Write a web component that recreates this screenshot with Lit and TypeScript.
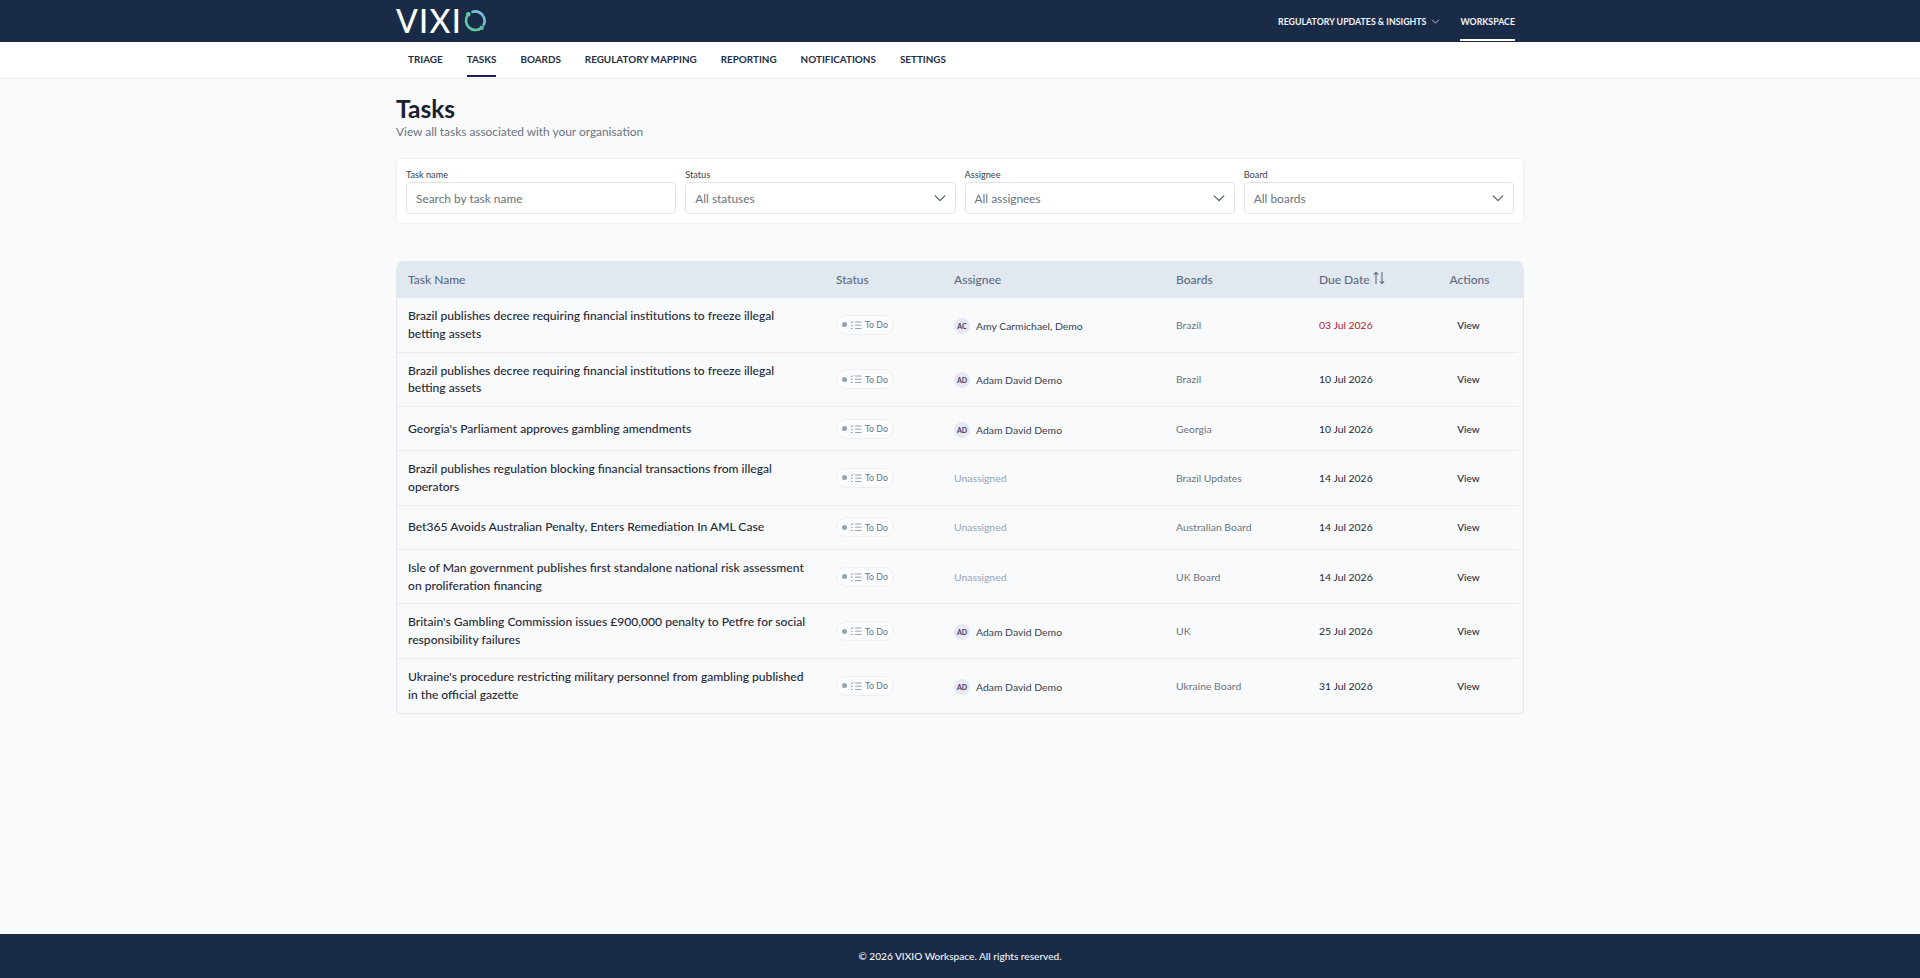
import { LitElement, html, css, svg } from 'lit';
import { customElement } from 'lit/decorators.js';

interface Task {
  name: string;
  initials?: string;
  assignee?: string;
  board: string;
  due: string;
  overdue?: boolean;
}

const TASKS: Task[] = [
  { name: 'Brazil publishes decree requiring financial institutions to freeze illegal betting assets', initials: 'AC', assignee: 'Amy Carmichael, Demo', board: 'Brazil', due: '03 Jul 2026', overdue: true },
  { name: 'Brazil publishes decree requiring financial institutions to freeze illegal betting assets', initials: 'AD', assignee: 'Adam David Demo', board: 'Brazil', due: '10 Jul 2026' },
  { name: "Georgia's Parliament approves gambling amendments", initials: 'AD', assignee: 'Adam David Demo', board: 'Georgia', due: '10 Jul 2026' },
  { name: 'Brazil publishes regulation blocking financial transactions from illegal operators', board: 'Brazil Updates', due: '14 Jul 2026' },
  { name: 'Bet365 Avoids Australian Penalty, Enters Remediation In AML Case', board: 'Australian Board', due: '14 Jul 2026' },
  { name: 'Isle of Man government publishes first standalone national risk assessment on proliferation financing', board: 'UK Board', due: '14 Jul 2026' },
  { name: "Britain's Gambling Commission issues £900,000 penalty to Petfre for social responsibility failures", initials: 'AD', assignee: 'Adam David Demo', board: 'UK', due: '25 Jul 2026' },
  { name: "Ukraine's procedure restricting military personnel from gambling published in the official gazette", initials: 'AD', assignee: 'Adam David Demo', board: 'Ukraine Board', due: '31 Jul 2026' },
];

const NAV = ['Triage', 'Tasks', 'Boards', 'Regulatory Mapping', 'Reporting', 'Notifications', 'Settings'];

const chevron = (size: number) => html`<svg width=${size} height=${size} viewBox="0 0 16 16" fill="none" stroke="currentColor" stroke-width="1.3" stroke-linecap="round" stroke-linejoin="round"><path d="M2.5 5.5 8 11l5.5-5.5" /></svg>`;

const checklist = svg`<path d="M.8 2 1.8 3 3.2 1.2M.8 5.2h2M.8 8.5h2M5 2h6.5M5 5.2h6.5M5 8.5h6.5" />`;

@customElement('app-root')
export class AppRoot extends LitElement {
  static styles = css`
    :host {
      display: flex;
      flex-direction: column;
      min-height: 978px;
      background: #f9fafc;
      color: #1f2937;
      font-family: Lato, "Noto Sans", sans-serif;
    }
    .wrap { width: 1128px; margin: 0 auto; }
    .topbar { background: #1a2b47; height: 42px; color: #f1f5f9; }
    .topbar .wrap { display: flex; align-items: center; justify-content: space-between; height: 100%; }
    .logo { display: flex; align-items: center; gap: 1px; color: #fff; font-size: 32px; font-weight: 500; line-height: 42px; letter-spacing: 1.3px; }
    .top-links { display: flex; align-items: stretch; height: 100%; gap: 20px; padding-right: 9px; font-size: 8.8px; font-weight: 700; }
    .top-links span { display: flex; align-items: center; gap: 5px; }
    .top-links .active { box-shadow: inset 0 -2px 0 #fff; margin-bottom: 1px; padding-top: 1px; }
    .subnav { background: #fff; height: 36px; border-bottom: 1px solid #e8ecf1; }
    .subnav .wrap { display: flex; gap: 24px; padding-left: 12px; box-sizing: border-box; }
    .subnav a { display: flex; align-items: center; height: 33px; padding-bottom: 2px; font-size: 9.9px; font-weight: 700; text-transform: uppercase; color: #1f2d44; }
    .subnav a.active { box-shadow: inset 0 -2px 0 #1e1b5e; }
    main { flex: 1; padding-top: 16px; }
    h1 { margin: 0; font-size: 24.5px; line-height: 28px; font-weight: 700; color: #1a202c; }
    .sub { margin: 1px 0 0; font-size: 11.9px; line-height: 16px; color: #6b7280; }
    .filters { display: grid; grid-template-columns: repeat(4, 1fr); gap: 9px; margin-top: 18px; padding: 9px; background: #fff; border: 1px solid #eef1f5; border-radius: 5px; }
    .filters label { display: block; font-size: 9.2px; line-height: 13px; margin-bottom: 1px; color: #374151; }
    .field { display: flex; align-items: center; justify-content: space-between; height: 32px; box-sizing: border-box; padding: 0 8px 0 9px; background: #fff; border: 1.5px solid #dfe3e9; border-radius: 4px; font-size: 11.9px; color: #6b7280; }
    .field svg { color: #4b5563; }
    .table { margin-top: 37px; border: 1px solid #e5e9ef; border-top: 0; border-radius: 8px 8px 4px 4px; overflow: hidden; }
    .row { display: grid; grid-template-columns: 428px 118px 222px 143px 130px 1fr; align-items: center; }
    .head { height: 37px; background: #e2e8f0; font-size: 12px; font-weight: 500; color: #5b6b82; }
    .head > div { padding-left: 11px; }
    .head .sort { display: flex; align-items: center; gap: 2px; }
    .head .sort svg { margin-top: -3px; }
    .head .actions { padding: 0 22px 0 0; text-align: center; }
    .body { padding-right: 5px; }
    .body .row { padding: 9px 0; border-bottom: 1px solid #e9edf2; }
    .body .row:last-child { border-bottom: 0; }
    .body .row > div { padding-left: 11px; }
    .name { font-size: 12.1px; line-height: 17.8px; font-weight: 500; color: #1f2937; padding-right: 13px; }
    .status { display: flex; }
    .pill { display: flex; align-items: center; gap: 3px; height: 18px; margin: 2.5px 0; padding: 0 5px; border: 1px solid #eceff4; border-radius: 10px; font-size: 8.8px; color: #6b7280; background: #fbfcfe; }
    .dot { width: 5px; height: 5px; border-radius: 50%; background: #94a3b8; }
    .pill svg { fill: none; stroke: #94a3b8; stroke-width: 1; }
    .assignee { display: flex; align-items: center; gap: 6px; padding-top: 2px; font-size: 10.4px; color: #374151; }
    .avatar { display: flex; align-items: center; justify-content: center; width: 16px; height: 16px; border-radius: 50%; background: #e8e8f3; color: #3b3a6b; font-size: 7px; font-weight: 700; }
    .none { font-size: 10.4px; color: #94a3b8; }
    .board { font-size: 10.4px; color: #6b7280; }
    .due { font-size: 10.4px; font-weight: 400; color: #1f2937; }
    .due.late { color: #b91c1c; }
    .view { padding: 0 19px 0 0 !important; text-align: center; font-size: 10px; font-weight: 500; color: #1f2937; }
    footer { height: 44px; background: #1a2b47; color: #f1f5f9; display: flex; align-items: center; justify-content: center; font-size: 10.1px; font-weight: 500; }
  `;

  render() {
    return html`
      <div class="topbar">
        <div class="wrap">
          <div class="logo">
            <span>VIXI</span>
            <svg width="24" height="24" viewBox="0 0 24 24" fill="none" stroke-width="2.6" stroke-linecap="round">
              <path d="M9.5 2.8A9.5 9.5 0 0 1 20.8 15.6" stroke="#74c3da" />
              <path d="M5.3 5.3A9.5 9.5 0 0 0 18.7 18.7" stroke="#63c9a0" />
              <circle cx="5.3" cy="5.3" r="2.3" fill="#63c9a0" />
              <circle cx="18.7" cy="18.7" r="2.3" fill="#5bbd96" />
            </svg>
          </div>
          <div class="top-links">
            <span>REGULATORY UPDATES &amp; INSIGHTS ${chevron(9)}</span>
            <span class="active">WORKSPACE</span>
          </div>
        </div>
      </div>
      <div class="subnav">
        <div class="wrap">
          ${NAV.map((n) => html`<a class=${n === 'Tasks' ? 'active' : ''}>${n}</a>`)}
        </div>
      </div>
      <main>
        <div class="wrap">
          <h1>Tasks</h1>
          <p class="sub">View all tasks associated with your organisation</p>
          <div class="filters">
            <div><label>Task name</label><div class="field">Search by task name</div></div>
            <div><label>Status</label><div class="field">All statuses ${chevron(14)}</div></div>
            <div><label>Assignee</label><div class="field">All assignees ${chevron(14)}</div></div>
            <div><label>Board</label><div class="field">All boards ${chevron(14)}</div></div>
          </div>
          <div class="table">
            <div class="row head">
              <div>Task Name</div>
              <div>Status</div>
              <div>Assignee</div>
              <div>Boards</div>
              <div class="sort">Due Date
                <svg width="14" height="14" viewBox="0 0 14 14" fill="none" stroke="currentColor" stroke-width="1.1"><path d="M4 13V1.5M1.8 3.7 4 1.5l2.2 2.2M10 1v11.5M7.8 10.3 10 12.5l2.2-2.2" /></svg>
              </div>
              <div class="actions">Actions</div>
            </div>
            <div class="body">
              ${TASKS.map((t) => html`
                <div class="row">
                  <div class="name">${t.name}</div>
                  <div class="status"><span class="pill"><span class="dot"></span><svg width="12" height="10" viewBox="0 0 12 10">${checklist}</svg>To Do</span></div>
                  ${t.assignee
                    ? html`<div class="assignee"><span class="avatar">${t.initials}</span>${t.assignee}</div>`
                    : html`<div class="none">Unassigned</div>`}
                  <div class="board">${t.board}</div>
                  <div class="due ${t.overdue ? 'late' : ''}">${t.due}</div>
                  <div class="view">View</div>
                </div>
              `)}
            </div>
          </div>
        </div>
      </main>
      <footer>© 2026 VIXIO Workspace. All rights reserved.</footer>
    `;
  }
}
